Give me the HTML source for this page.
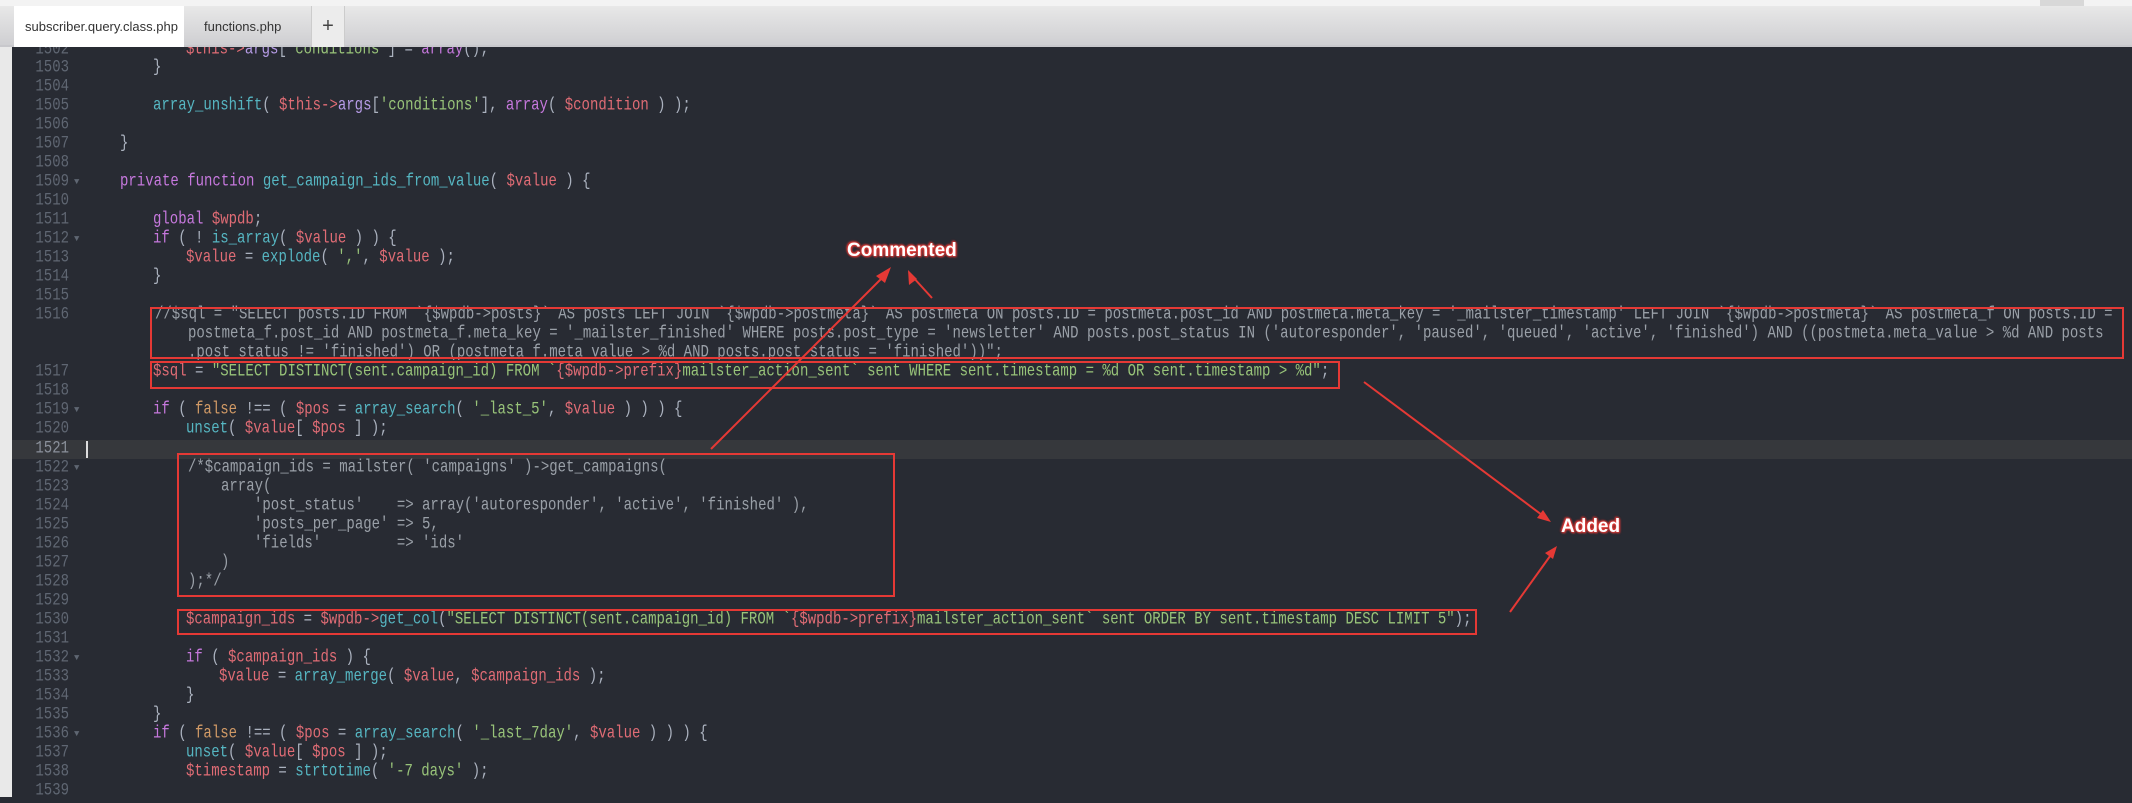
<!DOCTYPE html>
<html><head><meta charset="utf-8"><style>
*{margin:0;padding:0;box-sizing:border-box}
body{width:2132px;height:797px;overflow:hidden;background:#282b33;position:relative;font-family:"Liberation Mono",monospace}
.top{position:absolute;left:0;top:0;width:2132px;height:6px;background:#f3f3f3}
.bar{position:absolute;left:0;top:6px;width:2132px;height:41px;background:linear-gradient(#e8e8e8,#cfcfd2);border-bottom:2px solid #c8c8cc}
.tab{position:absolute;top:6px;height:41px;font:13px "Liberation Sans",sans-serif;color:#333;line-height:41px;padding-left:12px}
.lstrip{position:absolute;left:0;top:47px;width:12px;height:750px;background:#e9e9e9}
.row{position:absolute;height:19px;line-height:19px;font-size:14px;white-space:pre;color:#abb2bf;transform:scaleY(1.25);transform-origin:left center}
.n{position:absolute;left:20px;width:49px;text-align:right;color:#5f6672;font-size:14px;line-height:19px;height:19px;transform:scaleY(1.25)}
.f{position:absolute;left:74px;color:#5f6672;font-size:9px;line-height:19px}
.v{color:#e06c75}.fn{color:#56b6c2}.k{color:#c678dd}.s{color:#98c379}.c{color:#9aa0a8}.o{color:#d19a66}.p{color:#b69be6}
.box{position:absolute;border:2px solid #e53935}
.lbl{position:absolute;font:bold 19px "Liberation Sans",sans-serif;color:#fff;text-shadow:0 0 2px #e53935,0 0 2px #e53935,1px 1px 2px #e53935,-1px -1px 2px #e53935}
</style></head><body>
<div style="position:absolute;left:12px;top:440px;width:2120px;height:19px;background:#36383c"></div>
<div style="position:absolute;left:86px;top:441px;width:2px;height:17px;background:#ddd"></div>

<div class="n" style="top:41px">1502</div><div class="row" style="top:41px;left:186px"><span class="v">$this</span><span class="v">-></span><span class="p">args</span>[<span class="s">'conditions'</span>] = <span class="k">array</span>();</div>
<div class="n" style="top:59px">1503</div><div class="row" style="top:59px;left:153px">}</div>
<div class="n" style="top:78px">1504</div>
<div class="n" style="top:97px">1505</div><div class="row" style="top:97px;left:153px"><span class="fn">array_unshift</span>( <span class="v">$this</span><span class="v">-></span><span class="p">args</span>[<span class="s">'conditions'</span>], <span class="k">array</span>( <span class="v">$condition</span> ) );</div>
<div class="n" style="top:116px">1506</div>
<div class="n" style="top:135px">1507</div><div class="row" style="top:135px;left:120px">}</div>
<div class="n" style="top:154px">1508</div>
<div class="n" style="top:173px">1509</div><div class="f" style="top:173px">▼</div><div class="row" style="top:173px;left:120px"><span class="k">private function</span> <span class="fn">get_campaign_ids_from_value</span>( <span class="v">$value</span> ) {</div>
<div class="n" style="top:192px">1510</div>
<div class="n" style="top:211px">1511</div><div class="row" style="top:211px;left:153px"><span class="k">global</span> <span class="v">$wpdb</span>;</div>
<div class="n" style="top:230px">1512</div><div class="f" style="top:230px">▼</div><div class="row" style="top:230px;left:153px"><span class="k">if</span> ( ! <span class="fn">is_array</span>( <span class="v">$value</span> ) ) {</div>
<div class="n" style="top:249px">1513</div><div class="row" style="top:249px;left:186px"><span class="v">$value</span> = <span class="fn">explode</span>( <span class="s">','</span>, <span class="v">$value</span> );</div>
<div class="n" style="top:268px">1514</div><div class="row" style="top:268px;left:153px">}</div>
<div class="n" style="top:287px">1515</div>
<div class="n" style="top:306px">1516</div><div class="row c" style="top:306px;left:155px">//$sql = "SELECT posts.ID FROM `{$wpdb->posts}` AS posts LEFT JOIN `{$wpdb->postmeta}` AS postmeta ON posts.ID = postmeta.post_id AND postmeta.meta_key = '_mailster_timestamp' LEFT JOIN `{$wpdb->postmeta}` AS postmeta_f ON posts.ID =</div>
<div class="row c" style="top:325px;left:188px">postmeta_f.post_id AND postmeta_f.meta_key = '_mailster_finished' WHERE posts.post_type = 'newsletter' AND posts.post_status IN ('autoresponder', 'paused', 'queued', 'active', 'finished') AND ((postmeta.meta_value > %d AND posts</div>
<div class="row c" style="top:344px;left:188px">.post_status != 'finished') OR (postmeta_f.meta_value > %d AND posts.post_status = 'finished'))";</div>
<div class="n" style="top:363px">1517</div><div class="row" style="top:363px;left:153px"><span class="v">$sql</span> = <span class="s">"SELECT DISTINCT(sent.campaign_id) FROM `</span><span class="v">{$wpdb->prefix}</span><span class="s">mailster_action_sent` sent WHERE sent.timestamp = %d OR sent.timestamp > %d"</span>;</div>
<div class="n" style="top:382px">1518</div>
<div class="n" style="top:401px">1519</div><div class="f" style="top:401px">▼</div><div class="row" style="top:401px;left:153px"><span class="k">if</span> ( <span class="o">false</span> !== ( <span class="v">$pos</span> = <span class="fn">array_search</span>( <span class="s">'_last_5'</span>, <span class="v">$value</span> ) ) ) {</div>
<div class="n" style="top:420px">1520</div><div class="row" style="top:420px;left:186px"><span class="fn">unset</span>( <span class="v">$value</span>[ <span class="v">$pos</span> ] );</div>
<div class="n" style="top:440px;color:#8a909a">1521</div>
<div class="n" style="top:459px">1522</div><div class="f" style="top:459px">▼</div><div class="row c" style="top:459px;left:188px">/*$campaign_ids = mailster( 'campaigns' )->get_campaigns(</div>
<div class="n" style="top:478px">1523</div><div class="row c" style="top:478px;left:221px">array(</div>
<div class="n" style="top:497px">1524</div><div class="row c" style="top:497px;left:254px">'post_status'    => array('autoresponder', 'active', 'finished' ),</div>
<div class="n" style="top:516px">1525</div><div class="row c" style="top:516px;left:254px">'posts_per_page' => 5,</div>
<div class="n" style="top:535px">1526</div><div class="row c" style="top:535px;left:254px">'fields'         => 'ids'</div>
<div class="n" style="top:554px">1527</div><div class="row c" style="top:554px;left:221px">)</div>
<div class="n" style="top:573px">1528</div><div class="row c" style="top:573px;left:188px">);*/</div>
<div class="n" style="top:592px">1529</div>
<div class="n" style="top:611px">1530</div><div class="row" style="top:611px;left:186px"><span class="v">$campaign_ids</span> = <span class="v">$wpdb</span><span class="v">-></span><span class="fn">get_col</span>(<span class="s">"SELECT DISTINCT(sent.campaign_id) FROM `</span><span class="v">{$wpdb->prefix}</span><span class="s">mailster_action_sent` sent ORDER BY sent.timestamp DESC LIMIT 5"</span>);</div>
<div class="n" style="top:630px">1531</div>
<div class="n" style="top:649px">1532</div><div class="f" style="top:649px">▼</div><div class="row" style="top:649px;left:186px"><span class="k">if</span> ( <span class="v">$campaign_ids</span> ) {</div>
<div class="n" style="top:668px">1533</div><div class="row" style="top:668px;left:219px"><span class="v">$value</span> = <span class="fn">array_merge</span>( <span class="v">$value</span>, <span class="v">$campaign_ids</span> );</div>
<div class="n" style="top:687px">1534</div><div class="row" style="top:687px;left:186px">}</div>
<div class="n" style="top:706px">1535</div><div class="row" style="top:706px;left:153px">}</div>
<div class="n" style="top:725px">1536</div><div class="f" style="top:725px">▼</div><div class="row" style="top:725px;left:153px"><span class="k">if</span> ( <span class="o">false</span> !== ( <span class="v">$pos</span> = <span class="fn">array_search</span>( <span class="s">'_last_7day'</span>, <span class="v">$value</span> ) ) ) {</div>
<div class="n" style="top:744px">1537</div><div class="row" style="top:744px;left:186px"><span class="fn">unset</span>( <span class="v">$value</span>[ <span class="v">$pos</span> ] );</div>
<div class="n" style="top:763px">1538</div><div class="row" style="top:763px;left:186px"><span class="v">$timestamp</span> = <span class="fn">strtotime</span>( <span class="s">'-7 days'</span> );</div>
<div class="n" style="top:782px">1539</div>

<div class="box" style="left:150px;top:307px;width:1974px;height:52px"></div>
<div class="box" style="left:150px;top:361px;width:1190px;height:28px"></div>
<div class="box" style="left:177px;top:453px;width:718px;height:144px"></div>
<div class="box" style="left:177px;top:609px;width:1300px;height:26px"></div>

<svg style="position:absolute;left:0;top:0" width="2132" height="797">
<g stroke="#e53935" stroke-width="2" fill="#e53935">
<line x1="711" y1="449" x2="888" y2="272"/><polygon points="891,267 876,276 885,283" stroke="none"/>
<line x1="932" y1="298" x2="912" y2="276"/><polygon points="908,270 909,285 917,279" stroke="none"/>
<line x1="1364" y1="382" x2="1546" y2="518"/><polygon points="1551,522 1537,518 1543,510" stroke="none"/>
<line x1="1510" y1="612" x2="1553" y2="552"/><polygon points="1557,546 1545,553 1553,559" stroke="none"/>
</g></svg>
<div class="lbl" style="left:847px;top:240px">Commented</div>
<div class="lbl" style="left:1561px;top:516px">Added</div>

<div class="lstrip"></div>
<div class="top"></div>
<div class="bar"></div>
<div class="tab" style="left:14px;width:170px;background:#fff;padding-left:11px">subscriber.query.class.php</div>
<div class="tab" style="left:192px;width:120px;">functions.php</div>
<div style="position:absolute;left:311px;top:6px;width:34px;height:41px;background:#ececec;border-left:1px solid #ccc;border-right:1px solid #ccc;font:20px 'Liberation Sans',sans-serif;color:#444;text-align:center;line-height:40px">+</div>
<div style="position:absolute;left:2040px;top:0;width:44px;height:6px;background:#d8d8d8"></div>
</body></html>
